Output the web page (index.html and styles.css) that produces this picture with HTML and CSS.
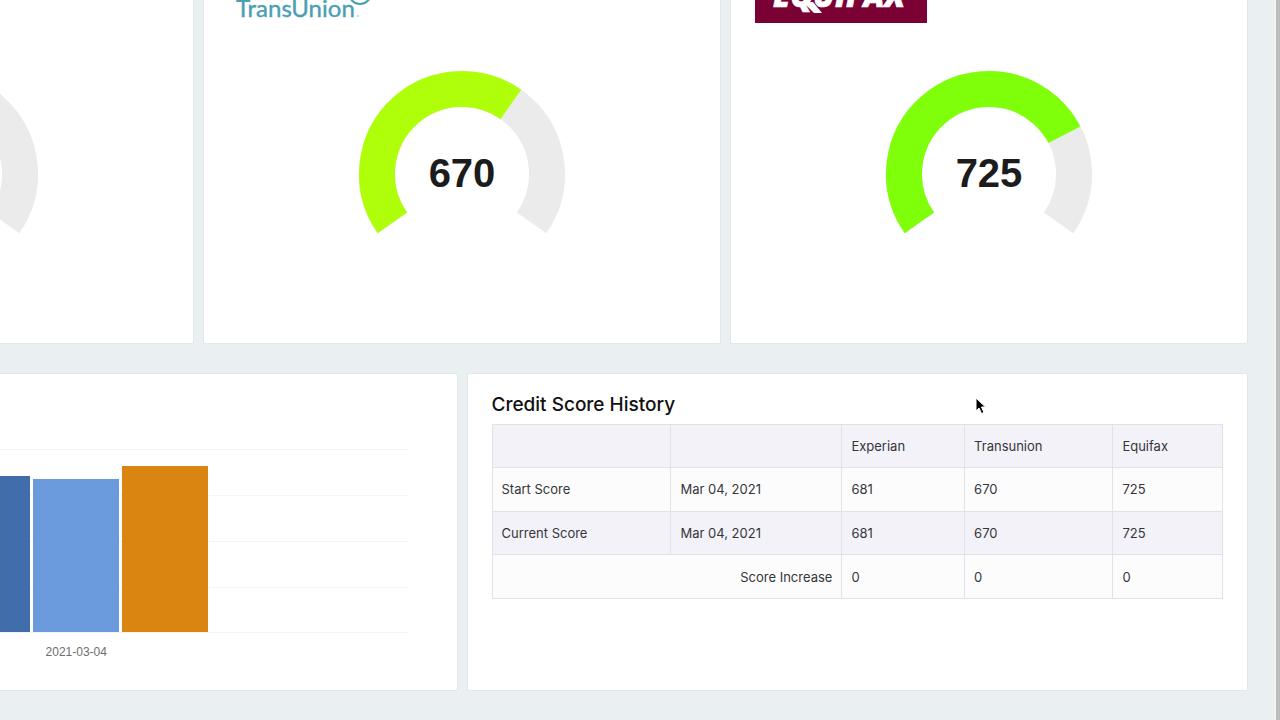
FILE: index.html
```
<!DOCTYPE html>
<html lang="en">
<head>
    <meta charset="UTF-8">
    <title>Credit Score Dashboard</title>
    <link rel="stylesheet" href="styles.css">
</head>
<body>
    <main class="dashboard">
        <section class="row scores">
            <div class="card score-card">
                <div class="logo"></div>
                <svg class="gauge" viewBox="0 0 208 170" role="img" aria-label="Experian score, 681">
                    <path class="track" d="M34.4 152.8A85 85 0 1 1 173.6 152.8"/>
                    <path class="value fair" pathLength="500" stroke-dasharray="329 600" d="M34.4 152.8A85 85 0 1 1 173.6 152.8"/>
                </svg>
            </div>
            <div class="card score-card">
                <svg class="logo" viewBox="0 0 172 59" role="img" aria-label="TransUnion">
                    <text class="transunion" x="8" y="53">TransUnion</text>
                    <circle class="tu-ring" cx="132" cy="29" r="11"/>
                    <circle class="tu-dot" cx="130" cy="52" r="1"/>
                </svg>
                <svg class="gauge" viewBox="0 0 208 170" role="img" aria-label="TransUnion score">
                    <path class="track" d="M34.4 152.8A85 85 0 1 1 173.6 152.8"/>
                    <path class="value fair" pathLength="500" stroke-dasharray="320 600" d="M34.4 152.8A85 85 0 1 1 173.6 152.8"/>
                    <text x="104" y="117">670</text>
                </svg>
            </div>
            <div class="card score-card">
                <svg class="logo" viewBox="0 0 172 59" role="img" aria-label="Equifax">
                    <rect class="eq-box" width="172" height="59"/>
                    <text class="equifax" x="18" y="43">EQUIFAX</text>
                    <path class="eq-tail" d="M48 38h10l9 11h-8z"/>
                </svg>
                <svg class="gauge" viewBox="0 0 208 170" role="img" aria-label="Equifax score">
                    <path class="track" d="M34.4 152.8A85 85 0 1 1 173.6 152.8"/>
                    <path class="value good" pathLength="500" stroke-dasharray="375 600" d="M34.4 152.8A85 85 0 1 1 173.6 152.8"/>
                    <text x="104" y="117">725</text>
                </svg>
            </div>
        </section>

        <section class="row details">
            <div class="card chart-card">
                <div class="plot">
                    <div class="bar experian" style="height: 85.1%"></div>
                    <div class="bar trans" style="height: 83.8%"></div>
                    <div class="bar equi" style="height: 90.6%"></div>
                </div>
                <p class="axis-label">2021-03-04</p>
            </div>
            <div class="card history-card">
                <h2>Credit Score History</h2>
                <table>
                    <colgroup>
                        <col class="col-label">
                        <col class="col-date">
                        <col class="col-exp">
                        <col class="col-trans">
                        <col class="col-equi">
                    </colgroup>
                    <thead>
                        <tr>
                            <th></th>
                            <th></th>
                            <th scope="col">Experian</th>
                            <th scope="col">Transunion</th>
                            <th scope="col">Equifax</th>
                        </tr>
                    </thead>
                    <tbody>
                        <tr>
                            <td>Start Score</td>
                            <td>Mar 04, 2021</td>
                            <td>681</td>
                            <td>670</td>
                            <td>725</td>
                        </tr>
                        <tr class="striped">
                            <td>Current Score</td>
                            <td>Mar 04, 2021</td>
                            <td>681</td>
                            <td>670</td>
                            <td>725</td>
                        </tr>
                        <tr>
                            <td colspan="2" class="increase">Score Increase</td>
                            <td>0</td>
                            <td>0</td>
                            <td>0</td>
                        </tr>
                    </tbody>
                </table>
            </div>
        </section>
    </main>

    <svg class="cursor" viewBox="0 0 12 18" aria-hidden="true">
        <path d="M1 1v13l3-3 2.500 5.500 2.500-1-2.500-5.500h4z"/>
    </svg>
</body>
</html>
```
FILE: styles.css
```
* {
    box-sizing: border-box;
}
body {
    margin: 0;
    min-height: 100vh;
    overflow: hidden;
    background: #eaeff2;
    border-right: 4px solid #bdbdbd;
    box-shadow: inset -2px 0 0 #f6f3f5;
    font-family: Inter, "Liberation Sans", sans-serif;
    font-size: 13px;
    color: #35353a;
}
/* the view is scrolled right and down inside the page */
.dashboard {
    margin: -61px 28px 0 -324px;
    display: flex;
    flex-direction: column;
    gap: 29px;
}
.row {
    display: grid;
    gap: 9px;
}
.scores {
    grid-template-columns: repeat(3, 1fr);
}
.details {
    grid-template-columns: repeat(2, 1fr);
}
.card {
    background: #fff;
    border: 1px solid #e2e7eb;
    border-radius: 2px;
}

/* score cards */
.score-card {
    display: flex;
    flex-direction: column;
    padding: 24px 24px 103px;
}
.logo {
    width: 172px;
    height: 59px;
    margin-bottom: 47px;
}
.transunion {
    font: 400 24px Lato, sans-serif;
    fill: #4a9fb3;
    stroke: #4a9fb3;
    stroke-width: 0.4;
}
.tu-ring {
    fill: none;
    stroke: #4a9fb3;
    stroke-width: 2;
}
.tu-dot {
    fill: #b5d6de;
}
.eq-box {
    fill: #7b0034;
}
.equifax {
    font: italic 800 31px "Open Sans", sans-serif;
    fill: #fff;
    stroke: #fff;
    stroke-width: 0.6;
}
.eq-tail {
    fill: #fff;
}
.gauge {
    width: 208px;
    height: 170px;
    align-self: center;
}
.gauge path {
    fill: none;
    stroke-width: 36;
}
.gauge .track {
    stroke: #ebebeb;
}
.gauge .fair {
    stroke: #b0ff0a;
}
.gauge .good {
    stroke: #80ff0a;
}
.gauge text {
    font: bold 40px "Liberation Sans", Arial, sans-serif;
    fill: #1c1c1c;
    text-anchor: middle;
}

/* bar chart */
.chart-card {
    padding: 75px 49px 30px 68px;
}
.plot {
    height: 184px;
    display: flex;
    justify-content: center;
    align-items: flex-end;
    gap: 3px;
    border-bottom: 1px solid #f3f3f3;
    background: repeating-linear-gradient(#f5f5f5 0 1px, transparent 1px 46px);
}
.bar {
    width: 13%;
}
.experian {
    background: #416daa;
}
.trans {
    background: #6c9bdd;
}
.equi {
    background: #da8511;
}
.axis-label {
    margin: 11px 0 0;
    font: 12px/16px "Liberation Sans", Arial, sans-serif;
    color: #6e6e6e;
    text-align: center;
}

/* history table */
.history-card {
    padding: 19px 24px 91px;
}
h2 {
    margin: 0 0 7px;
    font-size: 19px;
    line-height: 24px;
    font-weight: 500;
    color: #111;
}
table {
    width: 100%;
    height: 175px;
    border-collapse: collapse;
    table-layout: fixed;
    background: #fcfcfd;
}
.col-label {
    width: 24.5%;
}
.col-date {
    width: 23.4%;
}
.col-exp {
    width: 16.8%;
}
.col-trans {
    width: 20.3%;
}
.col-equi {
    width: 15%;
}
th, td {
    height: 43px;
    padding: 0 9px;
    border: 1px solid #e2e2e6;
    font-weight: 400;
    text-align: left;
}
thead tr, .striped {
    background: #f3f2f8;
}
.increase {
    text-align: right;
}

.cursor {
    position: absolute;
    left: 975px;
    top: 397px;
    width: 12px;
    height: 18px;
}
.cursor path {
    fill: #000;
    stroke: #fff;
    stroke-width: 1;
}
```
